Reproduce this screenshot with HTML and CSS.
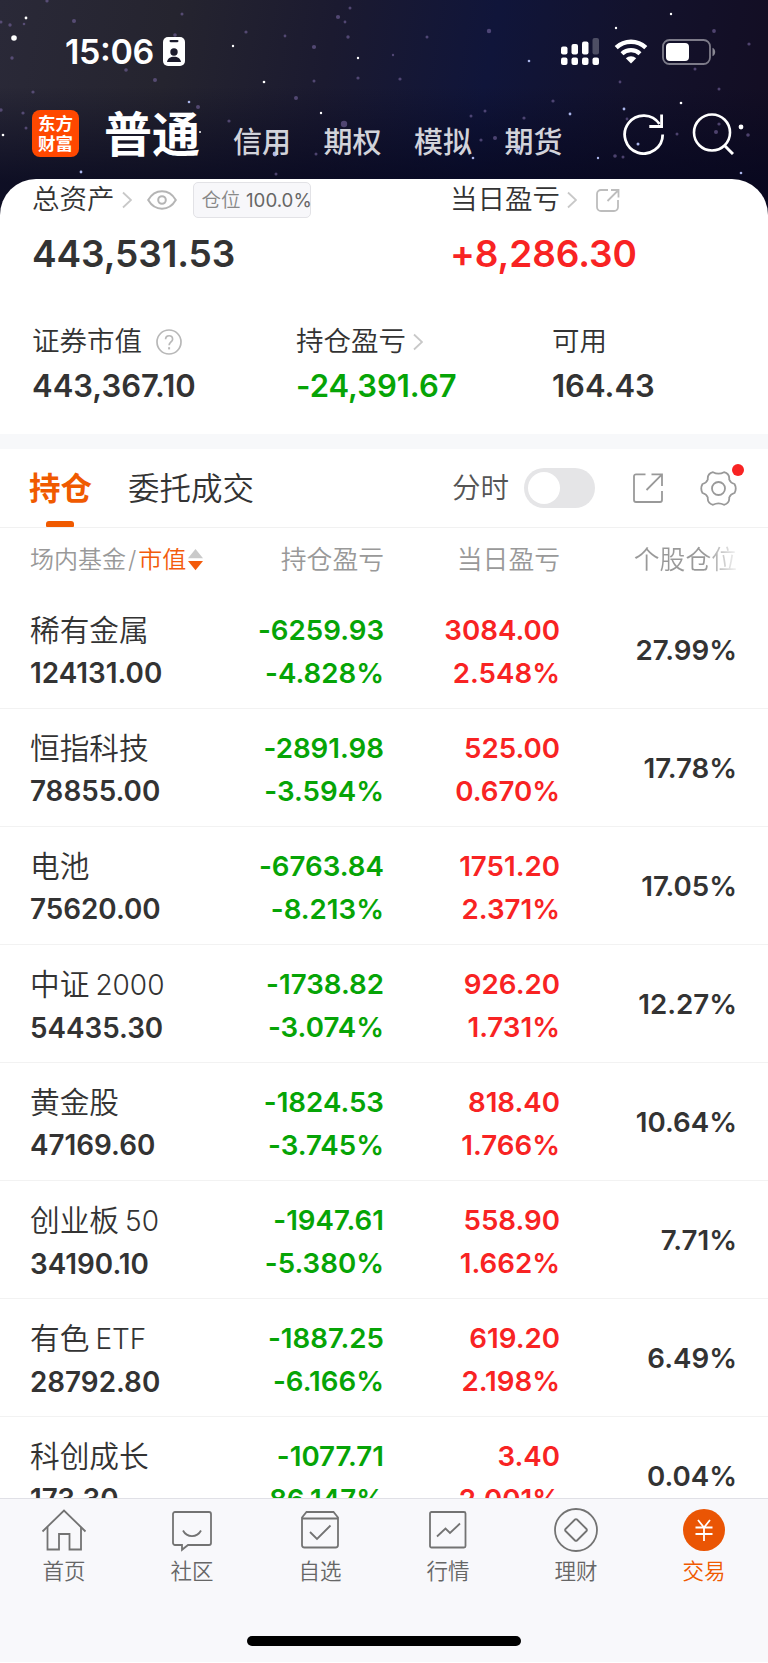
FILE: index.html
```
<!DOCTYPE html>
<html lang="zh-CN">
<head>
    <meta charset="UTF-8">
    <title>普通交易</title>
    <link rel="stylesheet" href="styles.css">
</head>
<body>
    <div class="header">
        <svg class="stars" width="768" height="220" viewBox="0 0 768 220">
            <g fill="#fff">
                <circle cx="14" cy="38" r="2.800"/><circle cx="26" cy="18" r="1.400"/><circle cx="233" cy="46" r="1.200"/>
                <circle cx="264" cy="82" r="1.300"/><circle cx="358" cy="58" r="1.200"/><circle cx="321" cy="113" r="1.200"/>
                <circle cx="3" cy="135" r="1.300"/><circle cx="200" cy="132" r="1"/><circle cx="671" cy="14" r="1.200"/>
                <circle cx="616" cy="28" r="1.200"/><circle cx="681" cy="103" r="1.300"/><circle cx="741" cy="127" r="2.400"/>
            </g>
            <g fill="#a9b4ea">
                <circle cx="81" cy="172" r="1.400"/><circle cx="529" cy="61" r="1.300"/><circle cx="570" cy="114" r="1.400"/>
                <circle cx="624" cy="109" r="1.400"/><circle cx="473" cy="158" r="1.300"/><circle cx="598" cy="158" r="1.200"/>
                <circle cx="741" cy="173" r="1.300"/><circle cx="638" cy="144" r="1.500"/><circle cx="275" cy="154" r="2.400"/>
                <circle cx="518" cy="148" r="2.400"/><circle cx="189" cy="102" r="1.300"/>
            </g>
            <g fill="#77669f" opacity=".6">
                <circle cx="10" cy="25" r="1.700"/><circle cx="24" cy="24" r="1.300"/><circle cx="74" cy="21" r="2"/>
                <circle cx="1" cy="22" r="1.500"/><circle cx="47" cy="1" r="1.600"/><circle cx="182" cy="14" r="1.500"/>
                <circle cx="12" cy="58" r="1.700"/><circle cx="126" cy="70" r="1.800"/><circle cx="155" cy="80" r="2"/>
                <circle cx="33" cy="92" r="1.600"/><circle cx="175" cy="35" r="1.800"/><circle cx="198" cy="107" r="2"/>
                <circle cx="23" cy="113" r="1.600"/><circle cx="1" cy="110" r="1.700"/><circle cx="26" cy="128" r="1.500"/>
                <circle cx="246" cy="32" r="1.600"/><circle cx="285" cy="36" r="1.400"/><circle cx="314" cy="47" r="2.100"/>
                <circle cx="338" cy="17" r="2.100"/><circle cx="345" cy="22" r="1.400"/><circle cx="350" cy="8" r="1.500"/>
                <circle cx="348" cy="37" r="1.700"/><circle cx="358" cy="78" r="1.600"/><circle cx="314" cy="81" r="1.500"/>
                <circle cx="296" cy="98" r="2"/><circle cx="344" cy="124" r="3.200"/><circle cx="229" cy="121" r="1.600"/>
                <circle cx="427" cy="37" r="1.500"/><circle cx="489" cy="31" r="2.200"/><circle cx="400" cy="79" r="1.600"/>
                <circle cx="393" cy="55" r="1.200"/><circle cx="553" cy="101" r="1.600"/><circle cx="485" cy="111" r="1.500"/>
                <circle cx="471" cy="116" r="1.500"/><circle cx="524" cy="118" r="1.600"/><circle cx="481" cy="140" r="1.600"/>
                <circle cx="495" cy="138" r="2"/><circle cx="620" cy="82" r="1.400"/><circle cx="714" cy="31" r="1.900"/>
                <circle cx="749" cy="44" r="1.600"/><circle cx="695" cy="69" r="1.500"/><circle cx="719" cy="89" r="1.500"/>
                <circle cx="627" cy="119" r="1.400"/><circle cx="677" cy="134" r="1.500"/><circle cx="716" cy="132" r="2"/>
                <circle cx="719" cy="124" r="1.600"/><circle cx="748" cy="135" r="1.800"/><circle cx="615" cy="156" r="1.800"/>
                <circle cx="623" cy="157" r="1.500"/><circle cx="276" cy="174" r="1.500"/><circle cx="316" cy="154" r="1.500"/>
            </g>
        </svg>

        <div class="status-bar">
            <div class="clock">15:06</div>
            <svg class="badge-icon" width="22" height="29" viewBox="0 0 22 29">
                <rect width="22" height="29" rx="5" fill="#fff"/>
                <rect x="6.500" y="3" width="9" height="2.200" rx="1.100" fill="#1c1b2c"/>
                <circle cx="11" cy="15" r="3.700" fill="#1c1b2c"/>
                <path d="M4 25c.5-3.500 3.300-5.200 7-5.200s6.500 1.700 7 5.200z" fill="#1c1b2c"/>
            </svg>
            <div class="status-icons">
                <svg width="39" height="28" viewBox="0 0 39 28" fill="#fff">
                    <rect x="0" y="8.500" width="6.500" height="8" rx="2"/>
                    <rect x="10.500" y="6" width="6.500" height="10.500" rx="2"/>
                    <rect x="21" y="3.500" width="6.500" height="13" rx="2"/>
                    <rect x="31.500" y="0" width="6.500" height="16.500" rx="2" opacity=".25"/>
                    <rect x="0" y="19.500" width="6.500" height="7.500" rx="2"/>
                    <rect x="10.500" y="19.500" width="6.500" height="7.500" rx="2"/>
                    <rect x="21" y="19.500" width="6.500" height="7.500" rx="2"/>
                    <rect x="31.500" y="19.500" width="6.500" height="7.500" rx="2"/>
                </svg>
                <svg class="wifi" width="34" height="25" viewBox="0 0 34 25">
                    <path d="M2.200 8.600a21.500 21.500 0 0 1 29.600 0" fill="none" stroke="#fff" stroke-width="4.400"/>
                    <path d="M8 14.700a13 13 0 0 1 18 0" fill="none" stroke="#fff" stroke-width="4.200"/>
                    <path d="M11.800 19.200a7.600 7.600 0 0 1 10.400 0L17 24.600z" fill="#fff"/>
                </svg>
                <svg width="54" height="26" viewBox="0 0 54 26">
                    <rect x="1" y="1" width="47" height="24" rx="6.500" fill="none" stroke="#fff" stroke-opacity=".45" stroke-width="1.800"/>
                    <rect x="4" y="4" width="23" height="18" rx="4" fill="#fff"/>
                    <path d="M50.500 8.800c3.600 1.700 3.600 6.700 0 8.400z" fill="#fff" fill-opacity=".5"/>
                </svg>
            </div>
        </div>

        <div class="nav">
            <div class="logo"><span>东方</span><span>财富</span></div>
            <div class="nav-active">普通</div>
            <div class="nav-links">
                <span>信用</span>
                <span>期权</span>
                <span>模拟</span>
                <span>期货</span>
            </div>
            <svg class="refresh" width="42" height="42" viewBox="0 0 42 42" fill="none" stroke="#fff" stroke-width="2.800">
                <path d="M39.700 21.500A19 19 0 1 1 36.500 11"/>
                <path d="M38.600 1.500v12H26.300"/>
            </svg>
            <svg class="search" width="42" height="42" viewBox="0 0 42 42" fill="none" stroke="#fff" stroke-width="2.600">
                <circle cx="20" cy="19.500" r="18"/>
                <path d="M32 32l9 9" stroke-width="3"/>
            </svg>
        </div>
    </div>

    <div class="summary">
        <div class="summary-top">
            <div class="total">
                <div class="label">
                    <span>总资产</span>
                    <svg class="chevron" width="10" height="18" viewBox="0 0 10 18"><path d="M1 1.500L9 9l-8 7.500"/></svg>
                    <svg class="eye" width="30" height="20" viewBox="0 0 30 20" fill="none" stroke="#b5b5b5" stroke-width="2">
                        <path d="M1.200 10C8-1.600 22-1.600 28.800 10 22 21.600 8 21.600 1.200 10z"/>
                        <circle cx="15" cy="10" r="3.800"/>
                    </svg>
                    <div class="position-tag">仓位 <b>100.0%</b></div>
                </div>
                <div class="amount">443,531.53</div>
            </div>
            <div class="today">
                <div class="label">
                    <span>当日盈亏</span>
                    <svg class="chevron" width="10" height="18" viewBox="0 0 10 18"><path d="M1 1.500L9 9l-8 7.500"/></svg>
                    <svg class="share-small" width="24" height="24" viewBox="0 0 24 24" fill="none" stroke="#bdbdbd" stroke-width="1.800">
                        <path d="M12 2H5a4 4 0 0 0-4 4v13a4 4 0 0 0 4 4h13a4 4 0 0 0 4-4v-7"/>
                        <path d="M11.500 13L22 2.500M15 2h7.500v7.500"/>
                    </svg>
                </div>
                <div class="amount up">+8,286.30</div>
            </div>
        </div>
        <div class="summary-bottom">
            <div>
                <div class="label">
                    <span>证券市值</span>
                    <svg class="help" width="26" height="26" viewBox="0 0 26 26" fill="none" stroke="#b8b8b8" stroke-width="1.700">
                        <circle cx="13" cy="13" r="12"/>
                        <path d="M9.600 10.200c0-4.600 7-4.600 7 0 0 2.600-3.500 2.800-3.500 6"/>
                        <path d="M13.100 18.200v2.200" stroke-width="2"/>
                    </svg>
                </div>
                <div class="value">443,367.10</div>
            </div>
            <div>
                <div class="label">
                    <span>持仓盈亏</span>
                    <svg class="chevron" width="10" height="18" viewBox="0 0 10 18"><path d="M1 1.500L9 9l-8 7.500"/></svg>
                </div>
                <div class="value down">-24,391.67</div>
            </div>
            <div>
                <div class="label"><span>可用</span></div>
                <div class="value">164.43</div>
            </div>
        </div>
    </div>

    <div class="tabs">
        <div class="tab active">持仓</div>
        <div class="tab">委托成交</div>
        <div class="tab-tools">
            <span>分时</span>
            <div class="toggle"></div>
            <svg class="share" width="30" height="30" viewBox="0 0 30 30" fill="none" stroke="#999" stroke-width="1.800">
                <path d="M12.500 1.300H3a2 2 0 0 0-2 2V27a2 2 0 0 0 2 2h24a2 2 0 0 0 2-2V18"/>
                <path d="M18.500 1.300H29V13M28.500 1.800L13.500 17"/>
            </svg>
            <div class="settings">
                <svg width="37" height="37" viewBox="0 0 37 37" fill="none" stroke="#999" stroke-width="1.800" stroke-linejoin="round">
                    <path d="M13 2.200Q18.500 5.200 24 2.200Q29.800 3.800 29.200 9.500Q30.500 13 34.500 14Q37 18.500 34.500 23Q30.500 24 29.200 27.500Q29.800 33.200 24 34.800Q18.500 31.800 13 34.800Q7.200 33.200 7.800 27.500Q6.500 24 2.500 23Q0 18.500 2.500 14Q6.500 13 7.800 9.500Q7.200 3.800 13 2.200z"/>
                    <circle cx="18.500" cy="18.500" r="6.500"/>
                </svg>
                <i class="dot"></i>
            </div>
        </div>
    </div>

    <div class="holdings">
        <div class="row head">
            <div class="sort">
                场内基金<em>/</em><span>市值</span>
                <svg width="15" height="22" viewBox="0 0 15 22">
                    <path d="M7.500 0L15 9.300H0z" fill="#c9c9c9"/>
                    <path d="M0 12h15l-7.500 9.300z" fill="#f35b0b"/>
                </svg>
            </div>
            <div>持仓盈亏</div>
            <div>当日盈亏</div>
            <div class="fade">个股仓位</div>
        </div>
        <div class="row">
            <div class="name">稀有金属<b>124131.00</b></div>
            <div class="down">-6259.93<br>-4.828%</div>
            <div class="up">3084.00<br>2.548%</div>
            <div class="ratio">27.99%</div>
        </div>
        <div class="row">
            <div class="name">恒指科技<b>78855.00</b></div>
            <div class="down">-2891.98<br>-3.594%</div>
            <div class="up">525.00<br>0.670%</div>
            <div class="ratio">17.78%</div>
        </div>
        <div class="row">
            <div class="name">电池<b>75620.00</b></div>
            <div class="down">-6763.84<br>-8.213%</div>
            <div class="up">1751.20<br>2.371%</div>
            <div class="ratio">17.05%</div>
        </div>
        <div class="row">
            <div class="name">中证<span>2000</span><b>54435.30</b></div>
            <div class="down">-1738.82<br>-3.074%</div>
            <div class="up">926.20<br>1.731%</div>
            <div class="ratio">12.27%</div>
        </div>
        <div class="row">
            <div class="name">黄金股<b>47169.60</b></div>
            <div class="down">-1824.53<br>-3.745%</div>
            <div class="up">818.40<br>1.766%</div>
            <div class="ratio">10.64%</div>
        </div>
        <div class="row">
            <div class="name">创业板<span>50</span><b>34190.10</b></div>
            <div class="down">-1947.61<br>-5.380%</div>
            <div class="up">558.90<br>1.662%</div>
            <div class="ratio">7.71%</div>
        </div>
        <div class="row">
            <div class="name">有色<span>ETF</span><b>28792.80</b></div>
            <div class="down">-1887.25<br>-6.166%</div>
            <div class="up">619.20<br>2.198%</div>
            <div class="ratio">6.49%</div>
        </div>
        <div class="row">
            <div class="name">科创成长<b>173.30</b></div>
            <div class="down">-1077.71<br>-86.147%</div>
            <div class="up">3.40<br>2.001%</div>
            <div class="ratio">0.04%</div>
        </div>
    </div>

    <div class="tab-bar">
        <div class="tab-items">
            <div class="tab-item">
                <svg width="46" height="44" viewBox="0 0 46 44">
                    <path d="M1.500 23.500L23 2.500l21.500 21"/>
                    <path d="M6.500 19v22.500h11.500V26h10.500v15.500H40V19"/>
                </svg>
                首页
            </div>
            <div class="tab-item">
                <svg width="46" height="44" viewBox="0 0 46 44">
                    <path d="M6 4h34a2 2 0 0 1 2 2v29a2 2 0 0 1-2 2H19l-6 4.800V37H6a2 2 0 0 1-2-2V6a2 2 0 0 1 2-2z"/>
                    <path d="M14 22.500c4 7.500 14 7.500 18 0"/>
                </svg>
                社区
            </div>
            <div class="tab-item">
                <svg width="46" height="44" viewBox="0 0 46 44">
                    <path d="M5 9.500L9.500 4h27L41 9.500V37a2.500 2.500 0 0 1-2.500 2.500h-31A2.500 2.500 0 0 1 5 37zM5 10.500h36"/>
                    <path d="M13 24l7 7 13.500-13.500"/>
                </svg>
                自选
            </div>
            <div class="tab-item">
                <svg width="46" height="44" viewBox="0 0 46 44">
                    <rect x="5" y="4" width="35.500" height="35.500" rx="1.500"/>
                    <path d="M12 28.500l8.500-8 4.500 4.500 10-9.500"/>
                </svg>
                行情
            </div>
            <div class="tab-item">
                <svg width="46" height="44" viewBox="0 0 46 44">
                    <circle cx="23" cy="22" r="21"/>
                    <path d="M22 11.500a1.400 1.400 0 0 1 2 0L33.500 21a1.400 1.400 0 0 1 0 2L24 32.500a1.400 1.400 0 0 1-2 0L12.500 23a1.400 1.400 0 0 1 0-2z"/>
                </svg>
                理财
            </div>
            <div class="tab-item current">
                <svg width="46" height="44" viewBox="0 0 46 44">
                    <circle class="disc" cx="23" cy="22" r="21"/>
                    <path d="M17 12l6 7.500 6-7.500M23 19.500V33M14.500 19.500h17M14.500 26h17"/>
                </svg>
                交易
            </div>
        </div>
        <div class="home-indicator"></div>
    </div>
</body>
</html>
```
FILE: styles.css
```
* {
    margin: 0;
    padding: 0;
    box-sizing: border-box;
}

body {
    width: 768px;
    height: 1663px;
    overflow: hidden;
    display: flex;
    flex-direction: column;
    font-family: Inter, "Noto Sans CJK SC", sans-serif;
    font-feature-settings: "calt" 0;
    background: #fff;
    color: #333;
}

svg {
    display: block;
    flex: none;
}

.up {
    color: #f82323;
}

.down {
    color: #06a406;
}

/* Header */
.header {
    position: relative;
    flex: none;
    height: 215px;
    background:
        linear-gradient(180deg, transparent 40%, rgba(5, 6, 30, 0.75) 85%),
        linear-gradient(100deg, #2a2938 0%, #25242f 22%, #1b1a30 42%, #10153a 62%, #13122c 80%, #130d22 100%);
}

.stars {
    position: absolute;
    left: 0;
    top: 0;
}

.status-bar {
    position: relative;
    display: flex;
    align-items: center;
    height: 103px;
    padding: 0 52px 0 65px;
    color: #fff;
}

.clock {
    width: 98px;
    font-size: 34px;
    font-weight: 600;
    letter-spacing: -0.4px;
    font-feature-settings: "calt" 1;
}

.status-icons {
    display: flex;
    align-items: center;
    margin-left: auto;
}

.wifi {
    margin: 0 14px;
}

.nav {
    position: relative;
    display: flex;
    height: 76px;
    padding-left: 32px;
    color: #fff;
}

.logo {
    display: flex;
    flex-direction: column;
    justify-content: center;
    width: 47px;
    height: 47px;
    margin-top: 7px;
    border-radius: 8px;
    background: #ff4800;
    font-size: 17.5px;
    font-weight: 700;
    line-height: 20px;
    text-align: center;
}

.nav-active {
    margin-left: 25px;
    font-size: 48px;
    font-weight: 700;
    line-height: 63px;
}

.nav-links {
    display: flex;
    gap: 32.500px;
    margin-left: 33px;
    font-size: 29px;
    font-weight: 500;
    line-height: 79px;
    color: #d2d3da;
}

.refresh {
    margin: 10px 0 0 60px;
}

.search {
    margin: 10px 0 0 27px;
}

/* Assets */
.summary {
    position: relative;
    flex: none;
    height: 255px;
    margin-top: -36px;
    padding-left: 32px;
    background: #fff;
    border-radius: 36px 36px 0 0;
}

.label {
    display: flex;
    align-items: center;
    height: 41px;
    font-size: 27.500px;
    font-weight: 350;
    line-height: 41px;
    white-space: nowrap;
}

.chevron {
    margin-left: 7px;
    fill: none;
    stroke: #c8c8c8;
    stroke-width: 1.8;
}

.eye {
    margin-left: 15px;
}

.position-tag {
    width: 118px;
    height: 36px;
    margin-left: 16px;
    padding-left: 8px;
    border: 1px solid #e2e2e6;
    border-radius: 5px;
    background: #f7f7fa;
    font-size: 19.500px;
    line-height: 34px;
    color: #888;
}

.position-tag b {
    font-size: 18.700px;
    font-weight: 400;
    color: #666;
}

.share-small {
    margin-left: 19px;
}

.summary-top {
    display: grid;
    grid-template-columns: 418px 1fr;
    height: 142px;
}

.amount {
    font-size: 37px;
    font-weight: 600;
    line-height: 68px;
    letter-spacing: -0.1px;
}

.summary-bottom {
    display: grid;
    grid-template-columns: 264px 256px 1fr;
}

.help {
    margin-left: 14px;
}

.value {
    font-size: 31px;
    font-weight: 600;
    line-height: 48px;
}

/* Tabs */
.tabs {
    flex: none;
    display: flex;
    height: 94px;
    padding: 0 31px 0 29px;
    border-top: 15px solid #f7f8fa;
    border-bottom: 1px solid #f1f1f1;
}

.tab {
    position: relative;
    margin-right: 36px;
    font-size: 31.500px;
    font-weight: 350;
    line-height: 79px;
}

.tab.active {
    font-weight: 700;
    color: #f05a00;
}

.tab.active::after {
    content: "";
    position: absolute;
    left: 17px;
    bottom: 0;
    width: 28px;
    height: 6px;
    border-radius: 3px 3px 1px 1px;
    background: #f05a00;
}

.tab-tools {
    display: flex;
    align-items: center;
    margin-left: auto;
    font-size: 28.500px;
    font-weight: 350;
    line-height: 40px;
    color: #555;
}

.toggle {
    width: 71px;
    height: 40px;
    margin-left: 15px;
    padding: 4px;
    border-radius: 20px;
    background: #e5e5e7;
}

.toggle::before {
    content: "";
    display: block;
    width: 32px;
    height: 32px;
    border-radius: 50%;
    background: #fff;
}

.share {
    margin-left: 38px;
}

.settings {
    position: relative;
    margin-left: 37px;
}

.dot {
    position: absolute;
    left: 32px;
    top: -6px;
    width: 12px;
    height: 12px;
    border-radius: 50%;
    background: #f82323;
}

/* Holdings table */
.holdings {
    flex: none;
    height: 970px;
    overflow: hidden;
}

.row {
    display: grid;
    grid-template-columns: 190px 164px 176px 177px;
    height: 118px;
    padding: 18px 31px 0 30px;
    border-bottom: 1px solid #f2f2f2;
    font-size: 27.700px;
    font-weight: 600;
    line-height: 43px;
    text-align: right;
}

.row.head {
    height: 63px;
    padding-top: 10px;
    border-bottom: 0;
    font-size: 25.800px;
    font-weight: 350;
    color: #999;
}

.sort {
    display: flex;
    align-items: center;
    height: 43px;
    font-size: 24px;
    line-height: 43px;
    white-space: nowrap;
}

.sort em {
    margin: 0 2px;
    font-style: normal;
}

.sort span {
    color: #f35b0b;
}

.sort svg {
    margin-left: 2px;
}

.fade {
    color: transparent;
    background: linear-gradient(90deg, #999 82%, #f4f4f4 100%);
    background-clip: text;
    -webkit-background-clip: text;
}

.name {
    font-size: 29.700px;
    font-weight: 350;
    text-align: left;
    white-space: nowrap;
}

.name span {
    margin-left: 6px;
    font-size: 28px;
}

.name b {
    display: block;
    font-size: 27.800px;
    font-weight: 600;
}

.ratio {
    line-height: 83px;
}

/* Bottom bar */
.tab-bar {
    flex: none;
    height: 164px;
    padding-top: 9px;
    border-top: 1px solid #e0e0e6;
    background: #f8f8fb;
}

.tab-items {
    display: grid;
    grid-template-columns: repeat(6, 1fr);
}

.tab-item {
    display: flex;
    flex-direction: column;
    align-items: center;
    font-size: 21.500px;
    font-weight: 350;
    line-height: 38px;
    color: #666;
}

.tab-item svg {
    fill: none;
    stroke: #737373;
    stroke-width: 1.8;
}

.tab-item.current {
    color: #f05a00;
}

.tab-item.current svg {
    stroke: #fff;
}

.tab-item .disc {
    fill: #ea5504;
    stroke: none;
}

.home-indicator {
    width: 274px;
    height: 10px;
    margin: 46px auto 0;
    border-radius: 5px;
    background: #000;
}
```
